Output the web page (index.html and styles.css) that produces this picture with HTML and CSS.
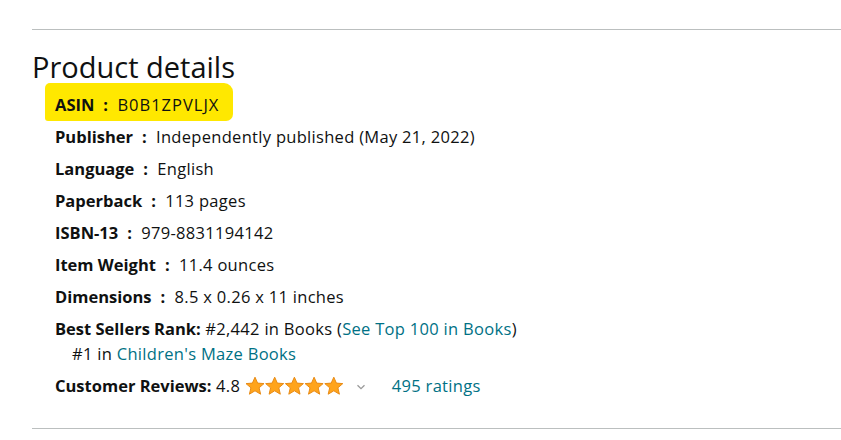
FILE: index.html
```html
<!DOCTYPE html>
<html>
<head>
<meta charset="utf-8">
<link rel="stylesheet" href="styles.css">
</head>
<body>
<div class="page">
  <hr class="divider top">
  <h2 class="title">Product details</h2>
  <ul class="details">
    <li class="row"><span class="mark"></span><span class="label">ASIN</span><span class="sep">:</span><span class="val asin">B0B1ZPVLJX</span></li>
    <li class="row"><span class="label">Publisher</span><span class="sep">:</span><span class="val">Independently published (May 21, 2022)</span></li>
    <li class="row"><span class="label">Language</span><span class="sep">:</span><span class="val">English</span></li>
    <li class="row"><span class="label">Paperback</span><span class="sep">:</span><span class="val">113 pages</span></li>
    <li class="row"><span class="label">ISBN-13</span><span class="sep">:</span><span class="val">979-8831194142</span></li>
    <li class="row"><span class="label">Item Weight</span><span class="sep">:</span><span class="val">11.4 ounces</span></li>
    <li class="row"><span class="label">Dimensions</span><span class="sep">:</span><span class="val">8.5 x 0.26 x 11 inches</span></li>
  </ul>
  <ul class="details extra">
    <li class="row rank"><span class="label">Best Sellers Rank:</span> #2,442 in Books (<a class="link" href="#">See Top 100 in Books</a>)
      <div class="sub">#1 in <a class="link" href="#">Children's Maze Books</a></div>
    </li>
    <li class="row reviews"><span class="label">Customer Reviews:</span> 4.8 <span class="stars"><svg width="100" height="20" viewBox="0 0 100 20">
          <defs>
            <polygon id="st" points="10,1.2 12.6,7.1 19,7.6 14.1,11.8 15.6,18.2 10,14.8 4.4,18.2 5.9,11.8 1,7.6 7.4,7.1"/>
          </defs>
          <g fill="#FFA41C" stroke="#E88B16" stroke-width="1" stroke-linejoin="round">
            <use href="#st" x="0"/>
            <use href="#st" x="19.7"/>
            <use href="#st" x="39.4"/>
            <use href="#st" x="59.1"/>
            <use href="#st" x="78.8"/>
          </g>
        </svg></span><svg class="chev" width="10" height="6" viewBox="0 0 10 6"><path d="M1.5 1.2 L5 4.6 L8.5 1.2" fill="none" stroke="#999" stroke-width="1.3"/></svg><a class="link ratings" href="#">495 ratings</a>
    </li>
  </ul>
  <hr class="divider bottom">
</div>
</body>
</html>
```
FILE: styles.css
```css
html, body {
  margin: 0;
  padding: 0;
}
html {
  background: #fff;
}
body {
  font-family: "Open Sans", "Noto Sans", Roboto, sans-serif;
  color: #0F1111;
  font-size: 16.5px;
  line-height: 25px;
  letter-spacing: 0.3px;
}
.page {
  padding: 29px 0 0 32px;
}
.divider {
  border: 0;
  border-top: 1px solid #bbbfbf;
  margin: 0;
  height: 0;
}
.title {
  font-size: 29px;
  font-weight: 400;
  line-height: 36px;
  margin: 19px 0 0 0;
  letter-spacing: 0;
}
.details {
  list-style: none;
  margin: 7px 0 0 23px;
  padding: 0;
}
.details.extra {
  margin-top: 0;
}
.row {
  position: relative;
  z-index: 0;
  margin-bottom: 7px;
}
.reviews {
  margin-top: 4px;
}
.mark {
  position: absolute;
  left: -10px;
  top: -9px;
  width: 188px;
  height: 38px;
  background: #ffe800;
  border-radius: 5px 9px 7px 3px;
  z-index: -1;
}
.label {
  font-weight: 700;
  letter-spacing: 0;
}
.sep {
  font-weight: 700;
  margin: 0 9px 0 9px;
}
.asin {
  letter-spacing: 1px;
}
.link {
  color: #007185;
  text-decoration: none;
}
.sub {
  padding-left: 17px;
}
.stars {
  display: inline-block;
  vertical-align: -4px;
}
.stars svg {
  display: block;
}
.chev {
  margin-left: 11px;
  margin-right: 26px;
  vertical-align: 2px;
}
.bottom {
  margin-top: 30px;
}
```
